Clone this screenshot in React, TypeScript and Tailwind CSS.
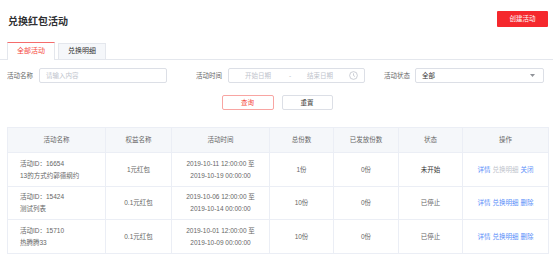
const rows = [
  {
    id: "16654",
    name: "13的方式约郭德纲约",
    benefit: "1元红包",
    start: "2019-10-11 12:00:00 至",
    end: "2019-10-19 00:00:00",
    total: "1份",
    sent: "0份",
    status: "未开始",
    actions: [
      { label: "详情", disabled: false },
      { label: "兑换明细", disabled: true },
      { label: "关闭", disabled: false },
    ],
  },
  {
    id: "15424",
    name: "测试列表",
    benefit: "0.1元红包",
    start: "2019-10-06 12:00:00 至",
    end: "2019-10-14 00:00:00",
    total: "10份",
    sent: "0份",
    status: "已停止",
    actions: [
      { label: "详情", disabled: false },
      { label: "兑换明细", disabled: false },
      { label: "删除", disabled: false },
    ],
  },
  {
    id: "15710",
    name: "热腾腾33",
    benefit: "0.1元红包",
    start: "2019-10-01 12:00:00 至",
    end: "2019-10-09 00:00:00",
    total: "10份",
    sent: "0份",
    status: "已停止",
    actions: [
      { label: "详情", disabled: false },
      { label: "兑换明细", disabled: false },
      { label: "删除", disabled: false },
    ],
  },
];

const heads = ["活动名称", "权益名称", "活动时间", "总份数", "已发放份数", "状态", "操作"];
const widths = ["w-[98px]", "w-[66px]", "w-[98px]", "w-[64px]", "w-[65px]", "w-[64px]", "w-[86px]"];

export default function App() {
  return (
    <div className="w-[553px] h-[255px] overflow-hidden bg-white font-['Liberation_Sans','Noto_Sans_CJK_SC',sans-serif] text-[6.5px] text-[#666]">
      {/* header */}
      <div className="flex justify-between pl-[8px] pr-[5px] pt-[11px] h-[42px]">
        <h1 className="mt-[4px] text-[10px] leading-[13px] font-semibold text-[#303133]">兑换红包活动</h1>
        <button className="w-[51px] h-[16px] bg-[#f5282d] text-white text-[6.5px] rounded-[1px]">创建活动</button>
      </div>

      {/* tabs */}
      <div className="flex items-end h-[18px] border-b border-[#e4e7ed] pl-[7px]">
        <div className="relative -mb-px flex items-center justify-center w-[48px] h-[18px] bg-white border-t border-t-[#f56c6c] border-x border-x-[#e4e7ed] text-[7px] text-[#f5483b]">
          全部活动
        </div>
        <div className="ml-[3px] flex items-center justify-center w-[48px] h-[16px] bg-[#f5f7fa] border-x border-t border-[#e4e7ed] text-[7px] text-[#333]">
          兑换明细
        </div>
      </div>

      {/* filters */}
      <div className="flex items-center mt-[8px] h-[15px] pl-[7px]">
        <span className="w-[32px]">活动名称</span>
        <div className="flex items-center w-[128px] h-[15px] border border-[#dcdfe6] rounded-[2px] pl-[6px] text-[#c0c4cc]">
          请输入内容
        </div>
        <span className="ml-[29px] w-[32px]">活动时间</span>
        <div className="flex items-center w-[137px] h-[15px] border border-[#dcdfe6] rounded-[2px] pl-[7px] text-[#c0c4cc]">
          <span className="w-[44px] text-center">开始日期</span>
          <span className="w-[20px] text-center">-</span>
          <span className="w-[40px] text-center">结束日期</span>
          <svg className="ml-auto mr-[6px]" width="9" height="9" viewBox="0 0 10 10" fill="none" stroke="#c0c4cc" strokeWidth="0.9">
            <circle cx="5" cy="5" r="4.3" />
            <path d="M5 2.6V5l1.6 1.2" />
          </svg>
        </div>
        <span className="ml-[19px] w-[31px]">活动状态</span>
        <div className="flex items-center w-[129px] h-[15px] border border-[#dcdfe6] rounded-[2px] pl-[6px] text-[#333]">
          全部
          <svg className="ml-auto mr-[8px]" width="5" height="3" viewBox="0 0 5 3">
            <path d="M0 0h5L2.5 3z" fill="#909399" />
          </svg>
        </div>
      </div>

      {/* actions */}
      <div className="flex justify-center gap-[8px] mt-[12px] pl-[1px]">
        <button className="w-[52px] h-[15px] border border-[#f8a5a2] rounded-[2px] text-[#f5483b]">查询</button>
        <button className="w-[51px] h-[15px] border border-[#dcdfe6] rounded-[2px] text-[#333]">重置</button>
      </div>

      {/* table */}
      <table className="mt-[17px] ml-[7px] w-[541px] table-fixed border-collapse">
        <thead>
          <tr className="h-[25px] bg-[#f5f7fa]">
            {heads.map((h, i) => (
              <th key={h} className={`${widths[i]} border border-[#ebeef5] font-normal text-[#666]`}>
                {h}
              </th>
            ))}
          </tr>
        </thead>
        <tbody className="text-[#666]">
          {rows.map((r, i) => (
            <tr key={r.id} className={i === 1 ? "h-[33px]" : "h-[34px]"}>
              <td className="border border-[#ebeef5] pl-[12px] leading-[12px]">
                <div>活动ID：{r.id}</div>
                <div>{r.name}</div>
              </td>
              <td className="border border-[#ebeef5] text-center">{r.benefit}</td>
              <td className="border border-[#ebeef5] text-center leading-[12px]">
                <div>{r.start}</div>
                <div>{r.end}</div>
              </td>
              <td className="border border-[#ebeef5] text-center">{r.total}</td>
              <td className="border border-[#ebeef5] text-center">{r.sent}</td>
              <td className={`border border-[#ebeef5] text-center ${i === 0 ? "text-[#333]" : "text-[#666]"}`}>{r.status}</td>
              <td className="border border-[#ebeef5] text-center">
                {r.actions.map((a, j) => (
                  <span key={a.label} className={`${j > 0 ? "ml-[2px]" : ""} ${a.disabled ? "text-[#c0c4cc]" : "text-[#5b8ff9]"}`}>
                    {a.label}
                  </span>
                ))}
              </td>
            </tr>
          ))}
        </tbody>
      </table>
    </div>
  );
}
